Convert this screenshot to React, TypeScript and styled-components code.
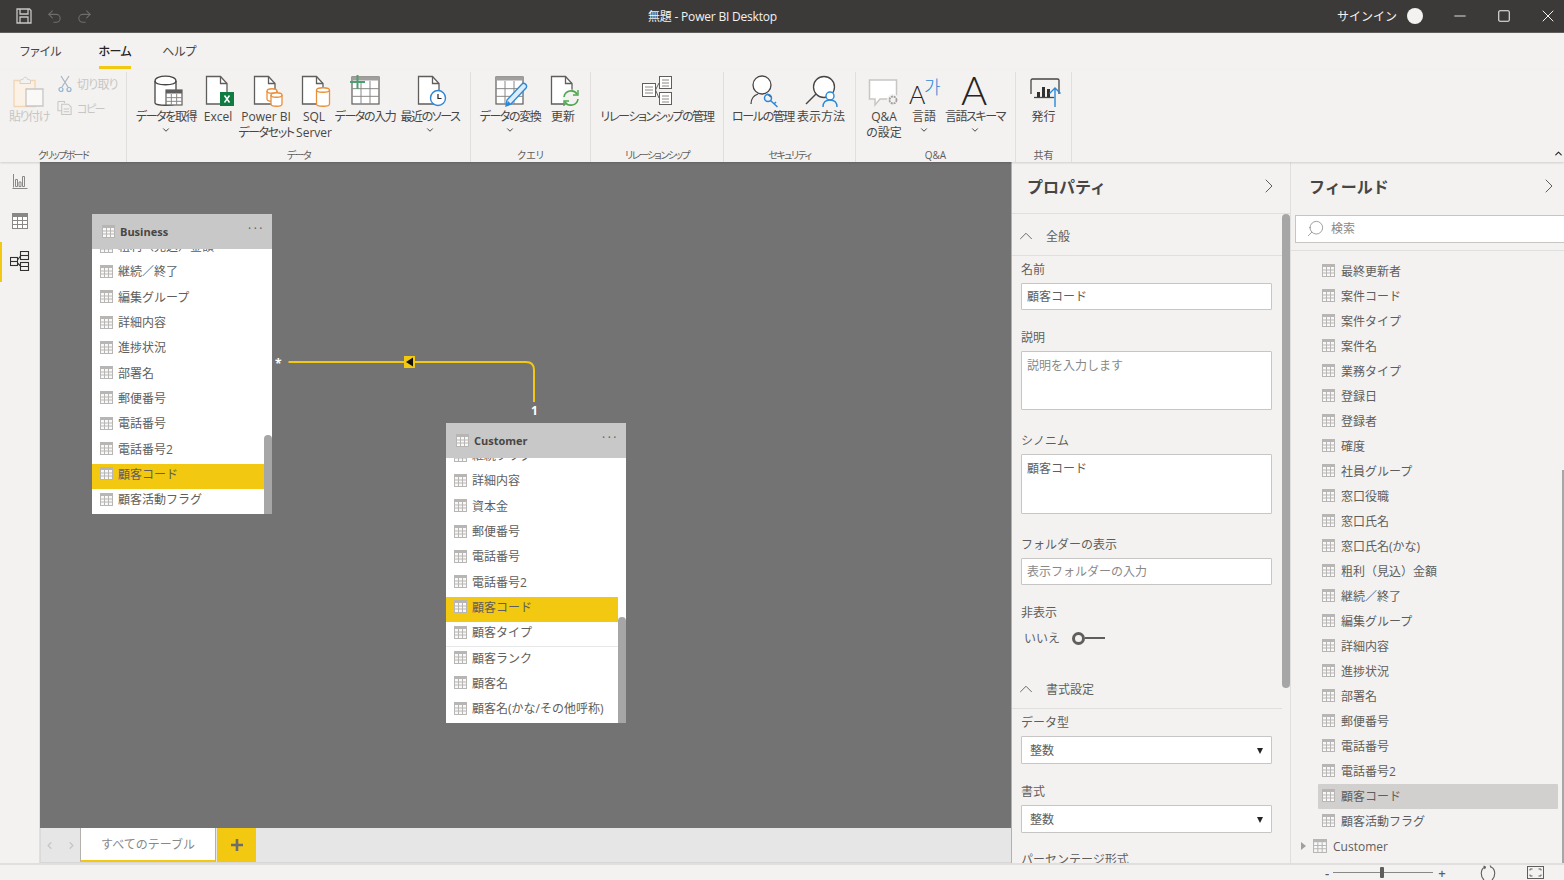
import { ReactNode } from "react";
import styled, { createGlobalStyle } from "styled-components";
import { ChevronDown, ChevronRight, ChevronUp, Minus, Redo2, Search, Square, Undo2, X } from "lucide-react";

const GlobalStyle = createGlobalStyle`
  html, body {
    margin: 0;
    padding: 0;
    overflow: hidden;
    background: #f3f2f1;
  }
  * {
    box-sizing: border-box;
  }
  body {
    font-family: "Open Sans", "Noto Sans CJK JP", sans-serif;
    color: #605e5c;
  }
`;

const Page = styled.div`
  width: 1564px;
  height: 880px;
  display: flex;
  flex-direction: column;
  overflow: hidden;
`;

/* title bar */
const TitleBar = styled.div`
  height: 33px;
  flex: none;
  background: #3b3a39;
  border-bottom: 1px solid #605e5c;
  display: grid;
  grid-template-columns: 648px auto 1fr;
  align-items: center;
  color: #f3f2f1;
  font-size: 12px;
`;
const WindowTitle = styled.span`
  letter-spacing: -0.2px;
`;
const QuickTools = styled.div`
  display: flex;
  align-items: center;
  gap: 13px;
  padding-left: 15px;
`;
const WindowTools = styled.div`
  display: flex;
  align-items: center;
  justify-content: flex-end;
  margin-right: -6px;
`;
const SignIn = styled.span`
  margin-right: 10px;
  font-size: 12px;
`;
const Avatar = styled.span`
  width: 16px;
  height: 16px;
  border-radius: 50%;
  background: #f3f2f1;
  margin-right: 15px;
`;
const WinButton = styled.span`
  width: 44px;
  display: flex;
  justify-content: center;
`;

/* tabs */
const MenuTabs = styled.div`
  height: 37px;
  flex: none;
  display: flex;
  gap: 37px;
  padding-left: 20px;
  background: #f3f2f1;
  font-feature-settings: "palt";
`;
const MenuTab = styled.div<{ $active?: boolean }>`
  height: 36px;
  padding-top: 9px;
  font-size: 12px;
  line-height: 20px;
  color: ${(p) => (p.$active ? "#252423" : "#484644")};
  font-weight: ${(p) => (p.$active ? 500 : 400)};
  letter-spacing: ${(p) => (p.$active ? "-0.6px" : "0")};
  margin-right: ${(p) => (p.$active ? "-6px" : "0")};
  border-bottom: 3px solid ${(p) => (p.$active ? "#f2c811" : "transparent")};
`;

/* ribbon */
const Ribbon = styled.div`
  height: 92px;
  flex: none;
  display: flex;
  position: relative;
  background: #f3f2f1;
  box-shadow: 0 1px 2px rgba(0, 0, 0, 0.15);
  z-index: 2;
  font-feature-settings: "palt";
`;
const Group = styled.div<{ $w: number }>`
  width: ${(p) => p.$w}px;
  height: 90px;
  margin-top: 2px;
  flex: none;
  display: flex;
  flex-direction: column;
  border-right: 1px solid #e1dfdd;
`;
const GroupItems = styled.div<{ $pad?: number; $center?: boolean }>`
  flex: 1;
  display: flex;
  padding-left: ${(p) => p.$pad ?? 0}px;
  justify-content: ${(p) => (p.$center ? "center" : "flex-start")};
`;
const GroupLabel = styled.div<{ $tight?: boolean }>`
  height: 16px;
  line-height: 18px;
  text-align: center;
  font-size: 10px;
  color: #605e5c;
  letter-spacing: ${(p) => (p.$tight ? "-1.6px" : "0")};
`;
const BigButton = styled.div<{ $w: number; $off?: boolean }>`
  width: ${(p) => p.$w}px;
  flex: none;
  display: flex;
  flex-direction: column;
  align-items: center;
  font-size: 12px;
  line-height: 16px;
  padding-top: 2px;
  white-space: nowrap;
  text-align: center;
  color: ${(p) => (p.$off ? "#c8c6c4" : "#484644")};
  svg.big {
    margin-bottom: 1px;
    flex: none;
  }
`;
const Tight = styled.span`
  letter-spacing: -1.4px;
`;
const SmallStack = styled.div`
  display: flex;
  flex-direction: column;
  margin-left: 2px;
`;
const SmallButton = styled.div`
  height: 24px;
  display: flex;
  align-items: center;
  gap: 4px;
  font-size: 12px;
  color: #c8c6c4;
  letter-spacing: -0.8px;
  svg {
    width: 16px;
  }
`;
const SmallCopy = styled.span`
  font-size: 11px;
  letter-spacing: -1.5px;
`;
const RibbonCollapse = styled.span`
  position: absolute;
  right: 0;
  bottom: 3px;
  display: flex;
  color: #252423;
`;

/* main */
const Main = styled.div`
  flex: 1;
  min-height: 0;
  display: flex;
`;
const Rail = styled.div`
  width: 40px;
  flex: none;
  background: #f3f2f1;
  border-right: 1px solid #e1dfdd;
`;
const RailItem = styled.div<{ $active?: boolean }>`
  height: 40px;
  display: flex;
  align-items: center;
  justify-content: center;
  border-left: 2px solid ${(p) => (p.$active ? "#f2c811" : "transparent")};
  padding: 0 2px 2px 0;
`;
const Work = styled.div`
  width: 971px;
  flex: none;
  display: flex;
  flex-direction: column;
`;
const Canvas = styled.div`
  flex: 1;
  position: relative;
  background: #737373;
  overflow: hidden;
`;
const TableCard = styled.div<{ $x: number; $y: number }>`
  position: absolute;
  left: ${(p) => p.$x}px;
  top: ${(p) => p.$y}px;
  width: 180px;
  height: 300px;
  background: #fff;
  display: flex;
  flex-direction: column;
`;
const CardHead = styled.div`
  height: 35px;
  flex: none;
  background: #c8c8c8;
  display: flex;
  align-items: center;
  gap: 5px;
  padding: 0 7px 0 10px;
  font-size: 11px;
  font-weight: 700;
  color: #484644;
  position: relative;
  z-index: 1;
`;
const CardDots = styled.span`
  margin-left: auto;
  margin-top: -5px;
  font-size: 12px;
  letter-spacing: 2.5px;
  font-weight: 400;
  color: #605e5c;
  line-height: 12px;
`;
const CardBody = styled.div`
  flex: 1;
  min-height: 0;
  position: relative;
  overflow: hidden;
`;
const CardList = styled.div`
  margin-top: -13px;
  width: 172px;
`;
const CardRow = styled.div<{ $on?: boolean; $line?: boolean }>`
  height: 25.3px;
  display: flex;
  align-items: center;
  gap: 5px;
  padding: 0 0 4px 8px;
  font-size: 12px;
  color: #605e5c;
  white-space: nowrap;
  background: ${(p) => (p.$on ? "#f2c811" : "transparent")};
  border-bottom: 1px solid ${(p) => (p.$line ? "#e8e8e8" : "transparent")};
`;
const CardThumb = styled.div<{ $top: number }>`
  position: absolute;
  right: 0;
  top: ${(p) => p.$top}px;
  bottom: 0;
  width: 8px;
  background: #a6a6a6;
  border-radius: 4px 4px 0 0;
`;
const Connector = styled.svg`
  position: absolute;
  left: 230px;
  top: 180px;
`;
const Cardinality = styled.span<{ $x: number; $y: number }>`
  position: absolute;
  left: ${(p) => p.$x}px;
  top: ${(p) => p.$y}px;
  font-size: 12px;
  line-height: 14px;
  font-weight: 700;
  color: #fff;
`;
const TabStrip = styled.div`
  height: 35px;
  flex: none;
  background: #e6e6e6;
  border-bottom: 1px solid #d9d7d5;
  display: flex;
`;
const TabNav = styled.div`
  width: 40px;
  display: flex;
  align-items: center;
  justify-content: space-between;
  padding: 0 3px;
  border-left: 1px solid #dadada;
`;
const PageTab = styled.div`
  width: 136px;
  background: #fff;
  border-left: 1px solid #b3b0ad;
  border-right: 1px solid #b3b0ad;
  border-bottom: 2px solid #f2c811;
  color: #8a8886;
  font-size: 12px;
  display: flex;
  align-items: center;
  justify-content: center;
  padding-bottom: 1px;
`;
const AddTab = styled.div`
  width: 39px;
  margin-left: 1px;
  background: #f2c811;
  display: flex;
  align-items: center;
  justify-content: center;
`;

/* properties */
const PropPanel = styled.div`
  width: 280px;
  flex: none;
  position: relative;
  overflow: hidden;
  background: #f3f2f1;
  border-left: 1px solid #b3b0ad;
  border-right: 1px solid #e1dfdd;
`;
const PanelHead = styled.div`
  height: 52px;
  border-bottom: 1px solid #e1dfdd;
  display: flex;
  align-items: center;
  justify-content: space-between;
  padding: 0 9px 3px 15px;
  font-size: 16px;
  font-weight: 600;
  color: #484644;
`;
const SectionHead = styled.div<{ $h?: number }>`
  height: ${(p) => p.$h ?? 41}px;
  display: flex;
  align-items: center;
  gap: 9px;
  padding: 2px 0 0 3px;
  font-size: 12px;
  color: #605e5c;
  border-bottom: 1px solid #e1dfdd;
  margin-right: 8px;
`;
const SectionBody = styled.div<{ $h?: number }>`
  padding: 4px 0 0 9px;
  height: ${(p) => (p.$h ? `${p.$h}px` : "auto")};
`;
const FormLabel = styled.div<{ $mt?: number }>`
  margin-top: ${(p) => p.$mt ?? 0}px;
  height: 18px;
  line-height: 20px;
  font-size: 12px;
  color: #605e5c;
  white-space: nowrap;
`;
const TextField = styled.div<{ $h?: number; $ph?: boolean; $select?: boolean }>`
  width: 251px;
  height: ${(p) => p.$h ?? 27}px;
  margin-top: 5px;
  background: #fff;
  border: 1px solid #c8c6c4;
  border-radius: 1px;
  padding: ${(p) => (p.$select || (p.$h ?? 27) > 50 ? 6 : 5)}px ${(p) => (p.$select ? 8 : 5)}px 0;
  font-size: 12px;
  line-height: 16px;
  color: ${(p) => (p.$ph ? "#8a8886" : "#605e5c")};
  display: flex;
  justify-content: space-between;
  align-items: flex-start;
`;
const Caret = styled.span`
  width: 0;
  height: 0;
  margin-top: 5px;
  border-left: 3px solid transparent;
  border-right: 3px solid transparent;
  border-top: 6px solid #252423;
`;
const ToggleRow = styled.div`
  height: 28px;
  margin-top: 3px;
  display: flex;
  align-items: center;
  gap: 12px;
  padding-left: 3px;
  font-size: 12px;
  color: #605e5c;
`;
const ToggleKnob = styled.span`
  width: 13px;
  height: 13px;
  border: 3px solid #605e5c;
  border-radius: 50%;
`;
const ToggleTail = styled.span`
  width: 20px;
  height: 2px;
  margin-left: -12px;
  background: #605e5c;
`;
const PropScroll = styled.div`
  position: absolute;
  left: 270px;
  top: 52px;
  width: 8px;
  height: 474px;
  border-radius: 4px;
  background: #a6a6a6;
`;

/* fields */
const FieldPanel = styled.div`
  flex: 1;
  min-width: 0;
  position: relative;
  overflow: hidden;
  background: #f3f2f1;
`;
const FieldHead = styled(PanelHead)`
  height: 53px;
  border-bottom: none;
  padding: 0 3px 5px 18px;
`;
const SearchBox = styled.div`
  height: 28px;
  margin-left: 4px;
  background: #fff;
  border: 1px solid #c8c6c4;
  border-right: none;
  display: flex;
  align-items: center;
  gap: 6px;
  padding: 0 0 2px 10px;
  font-size: 12px;
  color: #8a8886;
`;
const FieldRule = styled.div`
  margin-top: 7px;
  border-top: 1px solid #e1dfdd;
  height: 9px;
`;
const FieldRow = styled.div<{ $on?: boolean }>`
  height: 25px;
  width: 240px;
  margin-left: 27px;
  display: flex;
  align-items: center;
  gap: 6px;
  padding: 0 0 1px 4px;
  font-size: 12px;
  color: #605e5c;
  border-radius: 1px;
  background: ${(p) => (p.$on ? "#d2d0ce" : "transparent")};
  svg {
    margin-top: -2px;
  }
`;
const TableRow = styled.div`
  height: 26px;
  display: flex;
  align-items: center;
  gap: 6px;
  padding: 0 0 2px 10px;
  font-size: 12px;
  color: #605e5c;
`;
const TreeArrow = styled.span`
  width: 0;
  height: 0;
  margin-right: 1px;
  border-top: 4px solid transparent;
  border-bottom: 4px solid transparent;
  border-left: 5px solid #a19f9d;
`;
const FieldScroll = styled.div`
  position: absolute;
  right: 0;
  top: 308px;
  bottom: 0;
  width: 2px;
  background: #a6a6a6;
`;

/* status */
const StatusBar = styled.div`
  height: 17px;
  flex: none;
  background: #f3f2f1;
  border-top: 2px solid #e1dfdd;
  display: flex;
  align-items: center;
  justify-content: flex-end;
  padding-right: 20px;
  color: #605e5c;
  font-size: 13px;
`;
const ZoomSign = styled.span`
  width: 10px;
  text-align: center;
  line-height: 14px;
  font-weight: 600;
`;
const ZoomTrack = styled.div`
  width: 100px;
  height: 1px;
  margin: 0 4px 0 1px;
  background: #8a8886;
  position: relative;
`;
const ZoomThumb = styled.span`
  position: absolute;
  left: 47px;
  top: -5px;
  width: 4px;
  height: 11px;
  background: #605e5c;
  border-radius: 1px;
`;
const StatusIcon = styled.span<{ $ml: number }>`
  display: flex;
  margin-left: ${(p) => p.$ml}px;
`;

/* table glyph used all over */
const TableGlyph = ({ size = 13 }: { size?: number }) => (
  <svg width={size} height={size} viewBox="0 0 13 13" style={{ flex: "none" }}>
    <rect x="0" y="0" width="13" height="13" fill="#b8b6b4" />
    <rect x="1" y="3" width="11" height="9" fill="#f8f8f8" />
    <path d="M4.500 3v9M8.500 3v9M1 6h11M1 9h11" stroke="#b8b6b4" strokeWidth="1" />
  </svg>
);

const BigIcon = ({ children }: { children: ReactNode }) => (
  <svg className="big" width="36" height="34" viewBox="0 0 36 34" fill="none">
    {children}
  </svg>
);

const Doc = () => (
  <>
    <path d="M6.500 2.500h14l6.500 7v20.500H6.500z" fill="#fff" stroke="#605e5c" strokeWidth="1.300" />
    <path d="M20.500 2.500v7h6.500" stroke="#605e5c" strokeWidth="1.300" />
  </>
);

const Cyl = ({ x, y, w, h }: { x: number; y: number; w: number; h: number }) => (
  <>
    <path
      d={`M${x} ${y + 2}c0-3 ${w}-3 ${w} 0v${h - 4}c0 3-${w} 3-${w} 0z`}
      fill="#fff"
      stroke="#e8903a"
      strokeWidth="1.300"
    />
    <path d={`M${x} ${y + 2}c0 3 ${w} 3 ${w} 0`} stroke="#e8903a" strokeWidth="1.300" />
  </>
);

const Grid5 = ({ x, y, w, h, head = "#a19f9d" }: { x: number; y: number; w: number; h: number; head?: string }) => {
  const cx = w / 3;
  const cy = (h - 4) / 3;
  return (
    <>
      <rect x={x} y={y} width={w} height={h} fill="#fff" stroke="#605e5c" strokeWidth="1.200" />
      <rect x={x} y={y} width={w} height="3.500" fill={head} />
      <path
        d={`M${x + cx} ${y + 4}v${h - 4}M${x + 2 * cx} ${y + 4}v${h - 4}M${x} ${y + 4 + cy}h${w}M${x} ${y + 4 + 2 * cy}h${w}`}
        stroke="#8a8886"
        strokeWidth="1"
      />
    </>
  );
};

const IconPaste = () => (
  <BigIcon>
    <path d="M3 6.500h21v26H3z" fill="#fbf1e4" stroke="#f2d5b3" strokeWidth="1.300" />
    <path d="M9 6.500c1-1 2-1 3-1 .5-3 4-3 4.500 0 1 0 2 0 3 1v3H9z" fill="#f3f2f1" stroke="#d2d0ce" strokeWidth="1" />
    <path d="M15 15h17v17H15z" fill="#faf9f8" stroke="#c8c6c4" strokeWidth="1.300" />
  </BigIcon>
);
const IconGetData = () => (
  <BigIcon>
    <path d="M7 7c0-6.500 21-6.500 21 0v22c0 3-21 3-21 0z" fill="#fff" stroke="#484644" strokeWidth="1.300" />
    <path d="M7 7c0 5 21 5 21 0" stroke="#484644" strokeWidth="1.300" />
    <Grid5 x={18} y={16} w={16} h={15} head="#605e5c" />
  </BigIcon>
);
const IconExcel = () => (
  <BigIcon>
    <Doc />
    <rect x="20" y="18" width="14" height="14" fill="#107c41" />
    <path d="M24.500 21.500l5 7M29.500 21.500l-5 7" stroke="#fff" strokeWidth="1.500" />
  </BigIcon>
);
const IconPbi = () => (
  <BigIcon>
    <Doc />
    <Cyl x={19} y={15} w={10} h={12} />
    <Cyl x={23} y={19} w={11} h={13} />
  </BigIcon>
);
const IconSql = () => (
  <BigIcon>
    <Doc />
    <Cyl x={20.500} y={14} w={13} h={18} />
  </BigIcon>
);
const IconEnter = () => (
  <BigIcon>
    <Grid5 x={5} y={3} w={27} h={27} />
    <path d="M10.500 1v14M3 8h15" stroke="#4c9f70" strokeWidth="2" />
  </BigIcon>
);
const IconRecent = () => (
  <BigIcon>
    <Doc />
    <circle cx="26" cy="24" r="7.500" fill="#fff" stroke="#2b88d8" strokeWidth="1.400" />
    <path d="M26 20v4.500h3.500" stroke="#252423" strokeWidth="1.200" />
  </BigIcon>
);
const IconTransform = () => (
  <BigIcon>
    <Grid5 x={4} y={3} w={27} h={27} />
    <path d="M14 32l1-6 15-16c2-2 6 1 4 4L19 30z" fill="#deecf9" stroke="#2b88d8" strokeWidth="1.400" />
    <path d="M14 32l2-5 3 3z" fill="#2b88d8" />
  </BigIcon>
);
const IconRefresh = () => (
  <BigIcon>
    <Doc />
    <circle cx="26" cy="24" r="8.500" fill="#f3f2f1" />
    <path d="M19 23c1-7 10-8 13-3M33 25c-1 7-10 8-13 3" stroke="#4ca64c" strokeWidth="1.600" />
    <path d="M33 16v5h-5M19 32v-5h5" stroke="#4ca64c" strokeWidth="1.400" />
  </BigIcon>
);
const IconRelation = () => (
  <BigIcon>
    <rect x="3.500" y="9.500" width="13" height="13" fill="#fff" stroke="#605e5c" />
    <path d="M6 13h8M6 16h8M6 19h8" stroke="#8a8886" />
    <rect x="20.500" y="2.500" width="12" height="12" fill="#fff" stroke="#605e5c" />
    <path d="M23 6h7M23 9h7M23 12h7" stroke="#8a8886" />
    <rect x="20.500" y="18.500" width="12" height="12" fill="#fff" stroke="#605e5c" />
    <path d="M23 22h7M23 25h7M23 28h7" stroke="#8a8886" />
    <path d="M20 9l-3.500 7 3.500 8" stroke="#605e5c" />
  </BigIcon>
);
const IconRole = () => (
  <BigIcon>
    <circle cx="17" cy="11" r="9" fill="#fff" stroke="#484644" strokeWidth="1.300" />
    <path d="M6 30c0-6 4-9 7-10M22 20c2 1 3 2 4 3" stroke="#484644" strokeWidth="1.300" />
    <circle cx="23" cy="24" r="3.500" stroke="#2b88d8" strokeWidth="1.500" />
    <path d="M25.500 26.500l7 6.500M29 30l2-2" stroke="#2b88d8" strokeWidth="1.500" />
  </BigIcon>
);
const IconViewAs = () => (
  <BigIcon>
    <circle cx="21" cy="13" r="10.500" fill="#fff" stroke="#484644" strokeWidth="1.300" />
    <path d="M13 20L3 30" stroke="#484644" strokeWidth="1.500" />
    <circle cx="27" cy="22" r="4" fill="#fff" stroke="#2b88d8" strokeWidth="1.400" />
    <path d="M20 33c0-5 3-7 7-7s7 2 7 7" stroke="#2b88d8" strokeWidth="1.400" />
  </BigIcon>
);
const IconQna = () => (
  <BigIcon>
    <path d="M3.500 6h27v19H14l-5 6v-6H3.500z" fill="#fff" stroke="#c8c6c4" strokeWidth="1.500" />
    <circle cx="27" cy="26" r="6" fill="#f3f2f1" />
    <circle cx="27" cy="26" r="3.500" stroke="#a19f9d" strokeWidth="1.800" strokeDasharray="2 0.800" />
  </BigIcon>
);
const IconLang = () => (
  <BigIcon>
    <text x="3" y="30" fontFamily="Lato, sans-serif" fontWeight="300" fontSize="25" fill="#252423">
      A
    </text>
    <text x="18" y="20" fontFamily="'Noto Sans CJK KR', sans-serif" fontWeight="300" fontSize="18" fill="#2b88d8">
      가
    </text>
  </BigIcon>
);
const IconSchema = () => (
  <BigIcon>
    <text x="4" y="31" fontFamily="Lato, sans-serif" fontWeight="300" fontSize="40" fill="#252423">
      A
    </text>
  </BigIcon>
);
const IconPublish = () => (
  <BigIcon>
    <path d="M5 20V6.500c0-1 .5-1.500 1.500-1.500h25c1 0 1.500.5 1.500 1.500V20" stroke="#484644" strokeWidth="1.300" />
    <path d="M8 23.500h20" stroke="#484644" strokeWidth="1.300" />
    <path d="M11 23v-5h3v5zM16 23V13h3v10zM21 23V15h3v8z" fill="#323130" />
    <path d="M29 33V14M23.500 19.500l5.500-5.500 5.500 5.500" stroke="#2b88d8" strokeWidth="1.400" />
  </BigIcon>
);

const Chev = () => <ChevronDown size={10} strokeWidth={2.4} color="#484644" />;

const businessRows = ["粗利（見込）金額", "継続／終了", "編集グループ", "詳細内容", "進捗状況", "部署名", "郵便番号", "電話番号", "電話番号2", "顧客コード", "顧客活動フラグ"];
const customerRows = ["継続フラグ", "詳細内容", "資本金", "郵便番号", "電話番号", "電話番号2", "顧客コード", "顧客タイプ", "顧客ランク", "顧客名", "顧客名(かな/その他呼称)"];
const fieldRows = ["最終更新者", "案件コード", "案件タイプ", "案件名", "業務タイプ", "登録日", "登録者", "確度", "社員グループ", "窓口役職", "窓口氏名", "窓口氏名(かな)", "粗利（見込）金額", "継続／終了", "編集グループ", "詳細内容", "進捗状況", "部署名", "郵便番号", "電話番号", "電話番号2", "顧客コード", "顧客活動フラグ"];

const App = () => {
  return (
    <Page>
      <GlobalStyle />
      <TitleBar>
        <QuickTools>
          <svg width="18" height="18" viewBox="0 0 18 18" fill="none" stroke="#c8c6c4" strokeWidth="1.300">
            <path d="M2 2h12.500L16 3.500V16H2z" />
            <path d="M5 2v5h8V2M5 16v-6h8v6" />
          </svg>
          <Undo2 size={17} color="#6f6d6b" strokeWidth={1.5} />
          <Redo2 size={17} color="#6f6d6b" strokeWidth={1.5} />
        </QuickTools>
        <WindowTitle>無題 - Power BI Desktop</WindowTitle>
        <WindowTools>
          <SignIn>サインイン</SignIn>
          <Avatar />
          <WinButton>
            <Minus size={18} color="#f3f2f1" strokeWidth={1.2} />
          </WinButton>
          <WinButton>
            <Square size={14} color="#f3f2f1" strokeWidth={1.8} />
          </WinButton>
          <WinButton>
            <X size={20} color="#f3f2f1" strokeWidth={1.2} />
          </WinButton>
        </WindowTools>
      </TitleBar>

      <MenuTabs>
        <MenuTab>ファイル</MenuTab>
        <MenuTab $active>ホーム</MenuTab>
        <MenuTab>ヘルプ</MenuTab>
      </MenuTabs>

      <Ribbon>
        <Group $w={127}>
          <GroupItems $pad={3}>
            <BigButton $w={52} $off>
              <IconPaste />
              <Tight>貼り付け</Tight>
            </BigButton>
            <SmallStack>
              <SmallButton>
                <svg width="14" height="18" viewBox="0 0 14 18" fill="none" stroke="#a9b4bf" strokeWidth="1.200">
                  <path d="M3 1l7 11M11 1L4 12" />
                  <circle cx="3" cy="14.500" r="2" stroke="#8fb3d4" />
                  <circle cx="11" cy="14.500" r="2" stroke="#8fb3d4" />
                </svg>
                切り取り
              </SmallButton>
              <SmallButton>
                <svg width="17" height="16" viewBox="0 0 17 16" fill="none" stroke="#c8c6c4" strokeWidth="1.100">
                  <path d="M1 1h7v2M1 1v10h4" />
                  <path d="M5 4h7l3 3v8H5z" />
                  <path d="M7 9h6M7 12h6" />
                </svg>
                <SmallCopy>コピー</SmallCopy>
              </SmallButton>
            </SmallStack>
          </GroupItems>
          <GroupLabel $tight>クリップボード</GroupLabel>
        </Group>

        <Group $w={344}>
          <GroupItems $pad={9}>
            <BigButton $w={60}>
              <IconGetData />
              <Tight>データを取得</Tight>
              <Chev />
            </BigButton>
            <BigButton $w={44}>
              <IconExcel />
              Excel
            </BigButton>
            <BigButton $w={52}>
              <IconPbi />
              Power BI
              <br />
              <Tight>データセット</Tight>
            </BigButton>
            <BigButton $w={44}>
              <IconSql />
              SQL
              <br />
              Server
            </BigButton>
            <BigButton $w={58}>
              <IconEnter />
              <Tight>データの入力</Tight>
            </BigButton>
            <BigButton $w={72}>
              <IconRecent />
              <Tight>最近のソース</Tight>
              <Chev />
            </BigButton>
          </GroupItems>
          <GroupLabel $tight>データ</GroupLabel>
        </Group>

        <Group $w={120}>
          <GroupItems $pad={9}>
            <BigButton $w={60}>
              <IconTransform />
              <Tight>データの変換</Tight>
              <Chev />
            </BigButton>
            <BigButton $w={46}>
              <IconRefresh />
              更新
            </BigButton>
          </GroupItems>
          <GroupLabel>クエリ</GroupLabel>
        </Group>

        <Group $w={133}>
          <GroupItems $center>
            <BigButton $w={112}>
              <IconRelation />
              <Tight>リレーションシップの管理</Tight>
            </BigButton>
          </GroupItems>
          <GroupLabel $tight>リレーションシップ</GroupLabel>
        </Group>

        <Group $w={132}>
          <GroupItems $pad={9}>
            <BigButton $w={60}>
              <IconRole />
              <Tight>ロールの管理</Tight>
            </BigButton>
            <BigButton $w={56}>
              <IconViewAs />
              表示方法
            </BigButton>
          </GroupItems>
          <GroupLabel $tight>セキュリティ</GroupLabel>
        </Group>

        <Group $w={160}>
          <GroupItems $pad={8}>
            <BigButton $w={40}>
              <IconQna />
              Q&amp;A
              <br />
              の設定
            </BigButton>
            <BigButton $w={40}>
              <IconLang />
              言語
              <Chev />
            </BigButton>
            <BigButton $w={62}>
              <IconSchema />
              <Tight>言語スキーマ</Tight>
              <Chev />
            </BigButton>
          </GroupItems>
          <GroupLabel>Q&amp;A</GroupLabel>
        </Group>

        <Group $w={56}>
          <GroupItems $center>
            <BigButton $w={44}>
              <IconPublish />
              発行
            </BigButton>
          </GroupItems>
          <GroupLabel>共有</GroupLabel>
        </Group>

        <RibbonCollapse>
          <ChevronUp size={11} strokeWidth={2.4} />
        </RibbonCollapse>
      </Ribbon>

      <Main>
        <Rail>
          <RailItem>
            <svg width="16" height="16" viewBox="0 0 16 16" fill="none" stroke="#8a8886">
              <path d="M1.500 1v13.500M0.500 15.500h15" />
              <path d="M3.500 6.500h2v7h-2zM7 9h2v4.500H7zM10.500 3.500h2v10h-2z" />
            </svg>
          </RailItem>
          <RailItem>
            <svg width="16" height="16" viewBox="0 0 16 16" fill="none" stroke="#8a8886">
              <rect x="0.500" y="0.500" width="15" height="15" fill="#fff" />
              <rect x="0.500" y="0.500" width="15" height="3" fill="#8a8886" />
              <path d="M5.500 3.500v12M10.500 3.500v12M.5 7.500h15M.5 11.500h15" />
            </svg>
          </RailItem>
          <RailItem $active>
            <svg width="20" height="20" viewBox="0 0 20 20" fill="none" stroke="#323130" strokeWidth="1.100">
              <rect x="0.500" y="6.500" width="7" height="8" />
              <path d="M0.500 10.500h7" />
              <rect x="10.500" y="0.500" width="8" height="8" />
              <path d="M10.500 4.500h8" />
              <rect x="10.500" y="11.500" width="8" height="8" />
              <path d="M10.500 15.500h8M7.500 9l3-4M7.500 12l3 3" />
            </svg>
          </RailItem>
        </Rail>

        <Work>
          <Canvas>
            <TableCard $x={52} $y={52}>
              <CardHead>
                <TableGlyph />
                Business
                <CardDots>···</CardDots>
              </CardHead>
              <CardBody>
                <CardList>
                  {businessRows.map((row) => (
                    <CardRow key={row} $on={row === "顧客コード"}>
                      <TableGlyph />
                      {row}
                    </CardRow>
                  ))}
                </CardList>
                <CardThumb $top={186} />
              </CardBody>
            </TableCard>

            <Connector width="320" height="60" viewBox="230 180 320 60" fill="none">
              <path d="M248.500 200H486q8 0 8 8v32" stroke="#f2c811" strokeWidth="2" />
              <rect x="364" y="194" width="11" height="12" fill="#f2c811" />
              <path d="M366 200l7-4.500v9z" fill="#111" />
            </Connector>
            <Cardinality $x={235} $y={195}>*</Cardinality>
            <Cardinality $x={491} $y={242}>1</Cardinality>

            <TableCard $x={406} $y={261}>
              <CardHead>
                <TableGlyph />
                Customer
                <CardDots>···</CardDots>
              </CardHead>
              <CardBody>
                <CardList>
                  {customerRows.map((row) => (
                    <CardRow key={row} $on={row === "顧客コード"} $line={row === "顧客タイプ"}>
                      <TableGlyph />
                      {row}
                    </CardRow>
                  ))}
                </CardList>
                <CardThumb $top={159} />
              </CardBody>
            </TableCard>
          </Canvas>
          <TabStrip>
            <TabNav>
              <ChevronRight size={11} color="#c8c6c4" strokeWidth={3} style={{ transform: "scaleX(-1)" }} />
              <ChevronRight size={11} color="#c8c6c4" strokeWidth={3} />
            </TabNav>
            <PageTab>すべてのテーブル</PageTab>
            <AddTab>
              <svg width="12" height="12" viewBox="0 0 12 12" stroke="#6f6d6b" strokeWidth="2.600">
                <path d="M6 0v12M0 6h12" />
              </svg>
            </AddTab>
          </TabStrip>
        </Work>

        <PropPanel>
          <PanelHead>
            プロパティ
            <ChevronRight size={24} strokeWidth={1} color="#605e5c" />
          </PanelHead>
          <SectionHead $h={42}>
            <ChevronUp size={22} strokeWidth={1} />
            全般
          </SectionHead>
          <SectionBody $h={412}>
            <FormLabel>名前</FormLabel>
            <TextField>顧客コード</TextField>
            <FormLabel $mt={18}>説明</FormLabel>
            <TextField $h={59} $ph>説明を入力します</TextField>
            <FormLabel $mt={21}>シノニム</FormLabel>
            <TextField $h={60}>顧客コード</TextField>
            <FormLabel $mt={21}>フォルダーの表示</FormLabel>
            <TextField $ph>表示フォルダーの入力</TextField>
            <FormLabel $mt={18}>非表示</FormLabel>
            <ToggleRow>
              いいえ
              <ToggleKnob />
              <ToggleTail />
            </ToggleRow>
          </SectionBody>
          <SectionHead>
            <ChevronUp size={22} strokeWidth={1} />
            書式設定
          </SectionHead>
          <SectionBody>
            <FormLabel>データ型</FormLabel>
            <TextField $h={28} $select>
              整数
              <Caret />
            </TextField>
            <FormLabel $mt={18}>書式</FormLabel>
            <TextField $h={28} $select>
              整数
              <Caret />
            </TextField>
            <FormLabel $mt={17}>パーセンテージ形式</FormLabel>
          </SectionBody>
          <PropScroll />
        </PropPanel>

        <FieldPanel>
          <FieldHead>
            フィールド
            <ChevronRight size={24} strokeWidth={1} color="#605e5c" />
          </FieldHead>
          <SearchBox>
            <Search size={19} strokeWidth={1} color="#8a8886" style={{ transform: "scaleX(-1)" }} />
            検索
          </SearchBox>
          <FieldRule />
          {fieldRows.map((row) => (
            <FieldRow key={row} $on={row === "顧客コード"}>
              <TableGlyph />
              {row}
            </FieldRow>
          ))}
          <TableRow>
            <TreeArrow />
            <TableGlyph size={14} />
            Customer
          </TableRow>
          <FieldScroll />
        </FieldPanel>
      </Main>

      <StatusBar>
        <ZoomSign>-</ZoomSign>
        <ZoomTrack>
          <ZoomThumb />
        </ZoomTrack>
        <ZoomSign>+</ZoomSign>
        <StatusIcon $ml={33}>
          <svg width="16" height="15" viewBox="0 0 16 15" fill="none" stroke="#605e5c" strokeWidth="1.100">
            <path d="M5 2C0.500 4 0 11 4 15M11 2c4.500 2 5 9 1 13M3.500 1l2 1-1 2M10 0.500L11 2l-.5 .5" />
          </svg>
        </StatusIcon>
        <StatusIcon $ml={31}>
          <svg width="17" height="13" viewBox="0 0 17 13" fill="none" stroke="#605e5c" strokeWidth="1">
            <rect x="0.500" y="0.500" width="16" height="12" />
            <path d="M3 4.500V3h2.500M14 4.500V3h-2.500M3 8.500V10h2.500M14 8.500V10h-2.500" />
          </svg>
        </StatusIcon>
      </StatusBar>
    </Page>
  );
};

export default App;
